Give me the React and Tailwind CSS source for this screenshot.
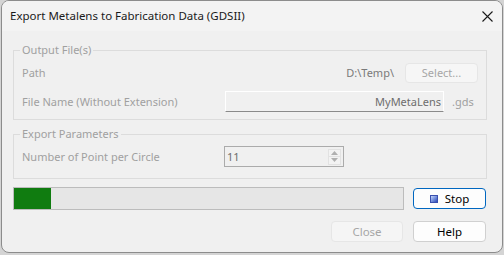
import React from "react";

const font = { fontFamily: "'Segoe UI', 'Noto Sans', 'Liberation Sans', sans-serif" };

const GroupBox = ({ title, children, className }) => (
  <fieldset className={`border border-[#dcdcdc] px-[8px] ${className}`}>
    <legend className="-ml-[2px] px-[2px] text-[11px] leading-[16px] text-[#a0a0a0]">
      {title}
    </legend>
    {children}
  </fieldset>
);

const SpinBox = ({ value }) => (
  <div className="flex h-[21px] w-[120px] items-center border border-[#ababab] bg-[#f0f0f0] pl-[2px] pr-[2px]">
    <span className="flex-1 text-[11px] leading-[16px] text-[#6d6d6d]">{value}</span>
    <div className="flex flex-col">
      <div className="flex h-[8px] w-[13px] items-center justify-center border border-[#e2e2e2] bg-[#f3f3f3]">
        <svg width="7" height="4" viewBox="0 0 7 4">
          <path d="M0 4 L3.5 0 L7 4 Z" fill="#b0b0b0" />
        </svg>
      </div>
      <div className="flex h-[8px] w-[13px] items-center justify-center border border-t-0 border-[#e2e2e2] bg-[#f3f3f3]">
        <svg width="7" height="4" viewBox="0 0 7 4">
          <path d="M0 0 L3.5 4 L7 0 Z" fill="#b0b0b0" />
        </svg>
      </div>
    </div>
  </div>
);

export default function App() {
  const progress = 9.5;

  return (
    <div className="h-[255px] w-[504px] bg-[#d4d4d4] pl-[1px]" style={font}>
      <div className="flex h-[253px] w-[502px] flex-col overflow-hidden rounded-[8px] border border-[#8c8c8c] bg-[#f0f0f0]">
        {/* title bar */}
        <div className="flex h-[30px] shrink-0 items-center bg-[#f3f3f3] pl-[8px] pr-[8px]">
          <span className="flex-1 text-[11.5px] leading-[16px] text-[#1a1a1a]">
            Export Metalens to Fabrication Data (GDSII)
          </span>
          <svg width="11" height="11" viewBox="0 0 11 11" className="mr-[1px]">
            <path d="M0.5 0.5 L10.5 10.5 M10.5 0.5 L0.5 10.5" stroke="#1a1a1a" strokeWidth="1.1" />
          </svg>
        </div>

        <div className="flex flex-col pl-[11px] pr-[15px] pt-[11px]">
          <GroupBox title="Output File(s)" className="pb-[7px]">
            <div className="mt-[5px] flex h-[20px] items-center text-[11px] leading-[16px]">
              <span className="flex-1 text-[#a0a0a0]">Path</span>
              <span className="text-[#7a7a7a]">D:\Temp\</span>
              <button className="ml-[11px] h-[20px] w-[73px] rounded-[4px] border border-[#e6e6e6] bg-[#f6f6f6] text-[11px] text-[#a6a6a6]">
                Select...
              </button>
            </div>
            <div className="mt-[8px] flex h-[21px] items-center text-[11px] leading-[16px]">
              <span className="flex-1 text-[#a0a0a0]">File Name (Without Extension)</span>
              <div className="flex h-[21px] w-[219px] items-center justify-end border border-white border-b-[#8a8a8a] bg-[#f0f0f0] pr-[2px] text-[#6d6d6d]">
                MyMetaLens
              </div>
              <span className="w-[34px] pl-[8px] text-[#a0a0a0]">.gds</span>
            </div>
          </GroupBox>

          <GroupBox title="Export Parameters" className="mt-[6px] pb-[11px]">
            <div className="mt-[4px] flex h-[21px] items-center text-[11px] leading-[16px]">
              <span className="w-[202px] text-[#a0a0a0]">Number of Point per Circle</span>
              <SpinBox value="11" />
            </div>
          </GroupBox>

          <div className="mt-[8px] flex items-center">
            <div className="h-[23px] w-[391px] border border-[#bcbcbc] bg-[#e6e6e6]">
              <div className="h-full bg-[#107c10]" style={{ width: `${progress}%` }} />
            </div>
            <button className="ml-[9px] flex h-[21px] w-[73px] items-center justify-center rounded-[4px] border border-[#0067c0] bg-[#fdfdfd] text-[11.5px] text-black">
              <span className="mr-[7px] h-[8px] w-[8px] border border-[#3a4fae] bg-gradient-to-br from-[#c9d8fb] to-[#2f47b8]" />
              Stop
            </button>
          </div>

          <div className="mt-[11px] flex justify-end gap-[10px] pr-[1px]">
            <button className="h-[21px] w-[72px] rounded-[4px] border border-[#e6e6e6] bg-[#f5f5f5] text-[11.5px] text-[#a6a6a6]">
              Close
            </button>
            <button className="h-[21px] w-[73px] rounded-[4px] border border-[#d0d0d0] bg-[#fdfdfd] text-[11.5px] text-black">
              Help
            </button>
          </div>
        </div>
      </div>
    </div>
  );
}
